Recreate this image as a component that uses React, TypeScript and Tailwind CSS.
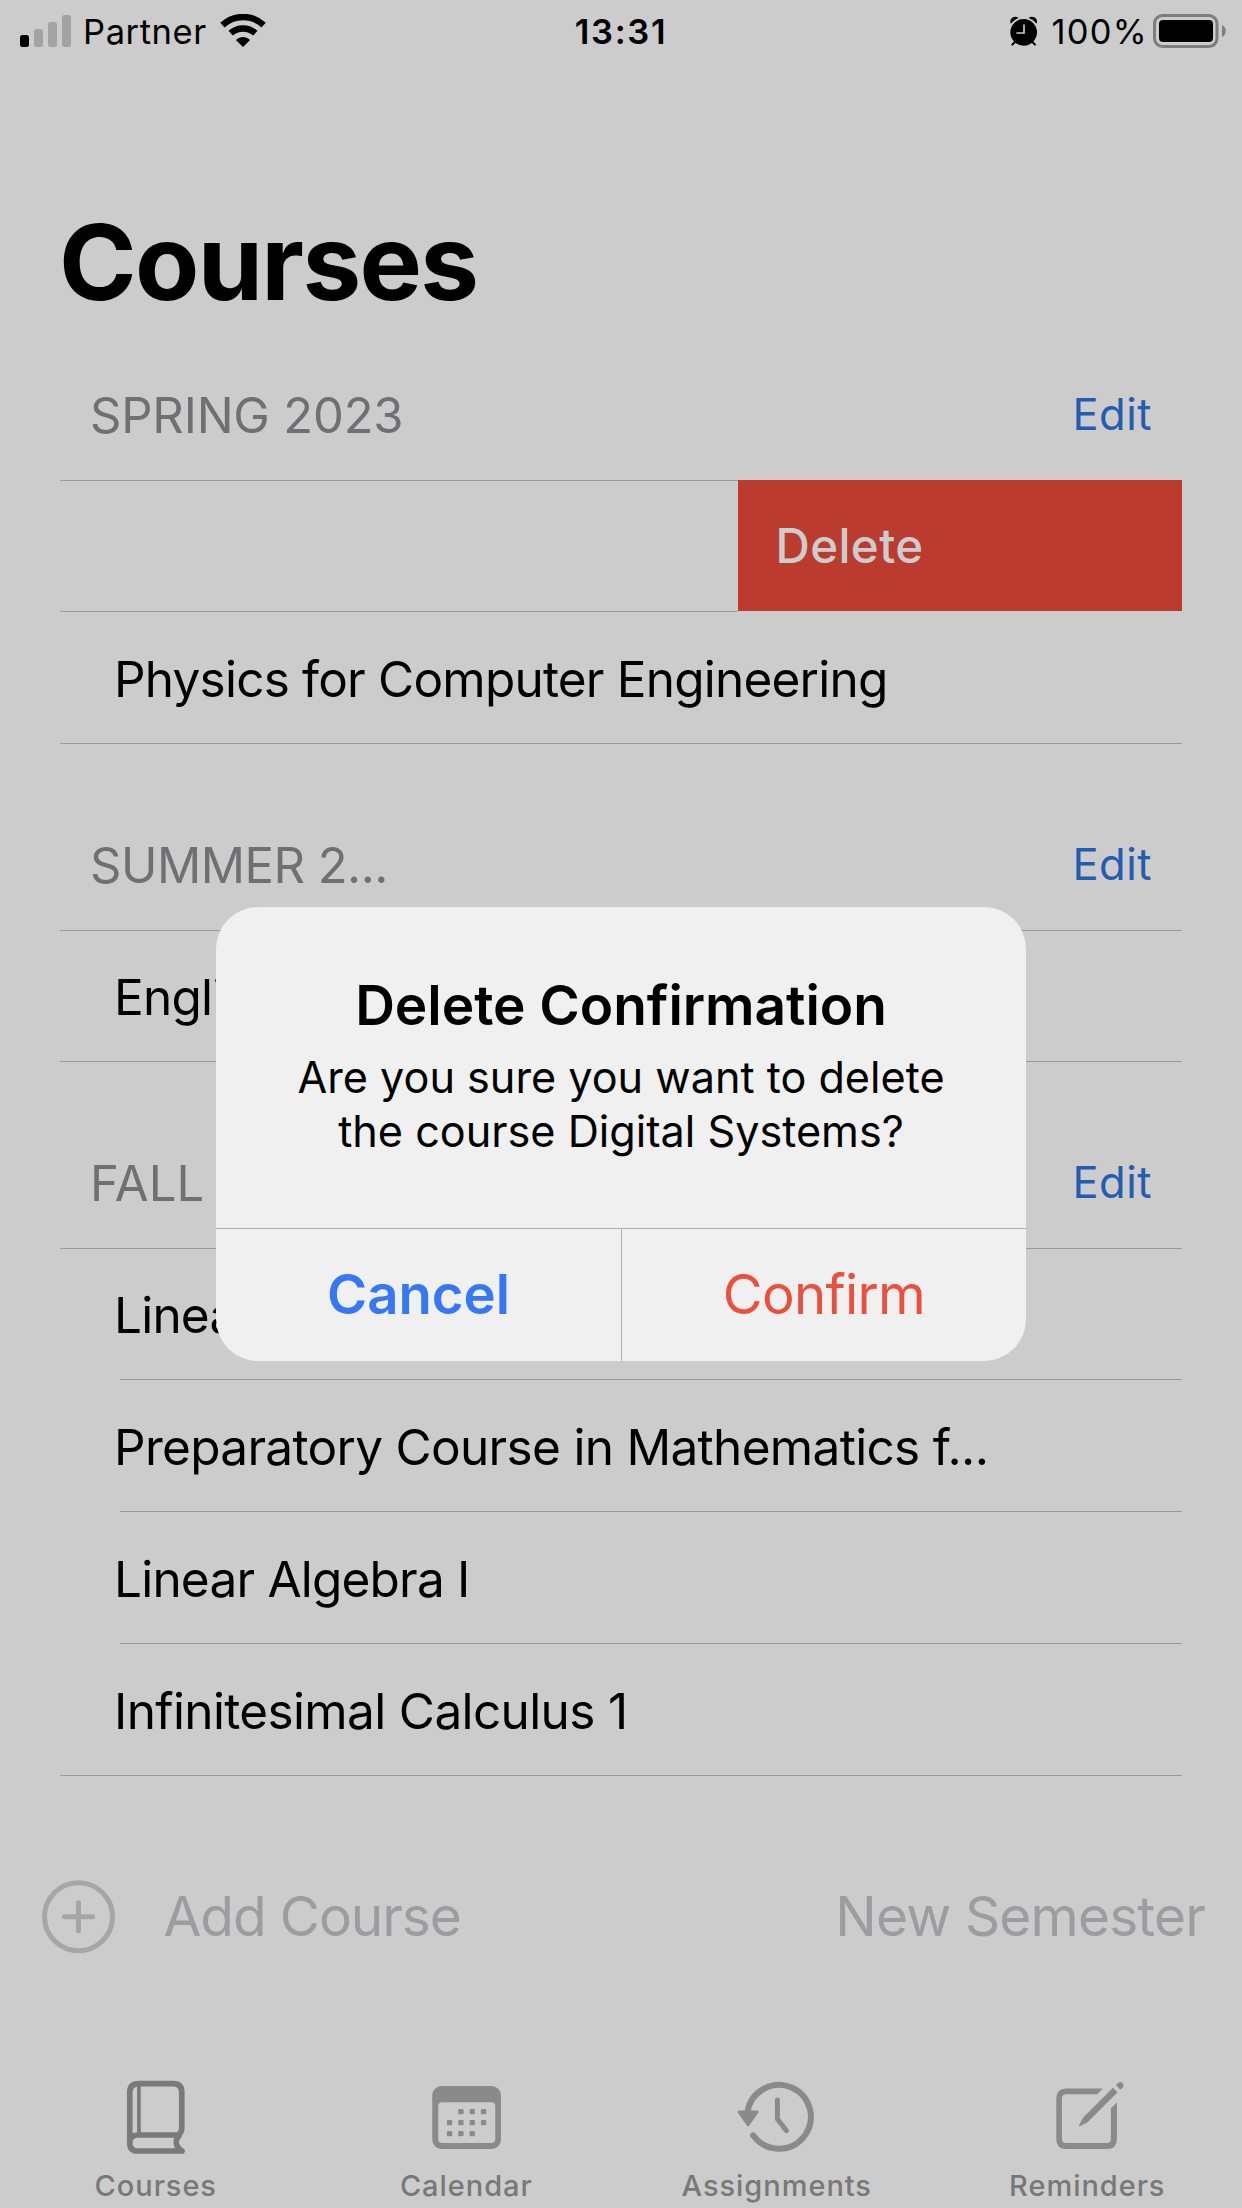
import type { ReactNode } from "react";

function SignalIcon() {
  return (
    <svg className="h-[32px] w-[51px] shrink-0" viewBox="0 0 51 32">
      <rect x="0" y="20" width="9" height="12" rx="2.5" fill="#000" />
      <rect x="14" y="14" width="9" height="18" rx="2.5" fill="#a3a3a3" />
      <rect x="28" y="7" width="9" height="25" rx="2.5" fill="#a3a3a3" />
      <rect x="42" y="0" width="9" height="32" rx="2.5" fill="#a3a3a3" />
    </svg>
  );
}

function WifiIcon() {
  return (
    <svg className="h-[34px] w-[46px] shrink-0" viewBox="-23 -33 46 34">
      <path d="M-20.6 -21.8A30 30 0 0 1 20.6 -21.8" fill="none" stroke="#000" strokeWidth="6.4" />
      <path d="M-12.4 -13.8A18.5 18.5 0 0 1 12.4 -13.8" fill="none" stroke="#000" strokeWidth="6.4" />
      <path d="M0 0L-6.6 -6.6Q-7 -7.4 -6 -8.1Q0 -12 6 -8.1Q7 -7.4 6.6 -6.6Z" fill="#000" />
    </svg>
  );
}

function AlarmIcon() {
  return (
    <svg className="h-[30px] w-[28px] shrink-0" viewBox="146 46 84 90">
      <circle cx="190" cy="95" r="40" fill="#000" />
      <path d="M151 69Q147 56 158 50Q168 45 175 52Q160 57 151 69Z" fill="#000" />
      <path d="M229 69Q233 56 222 50Q212 45 205 52Q220 57 229 69Z" fill="#000" />
      <path d="M164 124L156 132M216 124L224 132" stroke="#000" strokeWidth="6" strokeLinecap="round" />
      <path d="M191 73V97H170" fill="none" stroke="#ccc" strokeWidth="5" strokeLinecap="round" />
    </svg>
  );
}

function BatteryIcon() {
  return (
    <svg className="h-[34px] w-[73px] shrink-0" viewBox="0 0 73 34">
      <rect x="1.5" y="1.5" width="62.5" height="31" rx="8" fill="none" stroke="#7d7d7d" strokeWidth="3" />
      <rect x="6" y="6" width="54" height="22" rx="4" fill="#000" />
      <path d="M69 11Q72.7 13 72.7 17T69 23Z" fill="#7d7d7d" />
    </svg>
  );
}

function BookIcon() {
  return (
    <svg className="h-[80px] w-[90px]" viewBox="0.75 24 270 240" fill="none" stroke="#7a7a7a" strokeWidth="17">
      <path
        d="M60 218V68Q60 41 87 41H190Q216 41 216 67V176Q216 187 206 195H84Q60 196 60 218Q60 243 84 243H217"
        strokeLinecap="round"
        strokeLinejoin="round"
      />
      <path d="M211 193Q186 219 215 242" />
      <path d="M87.5 45V192" strokeWidth="11" />
    </svg>
  );
}

const calendarDots = [
  [1044, 117], [1078, 117], [1112, 117],
  [1010, 150], [1044, 150], [1078, 150], [1112, 150],
  [1010, 183], [1044, 183], [1078, 183],
];

function CalendarIcon() {
  return (
    <svg className="h-[80px] w-[90px]" viewBox="932.25 24 270 240" fill="#8a8a8a">
      <rect x="966" y="48" width="206" height="189" rx="28" />
      <rect x="984" y="97" width="171" height="122" rx="12" fill="#ccc" />
      {calendarDots.map(([x, y]) => (
        <rect key={`${x}-${y}`} x={x} y={y} width="16" height="16" rx="3" />
      ))}
    </svg>
  );
}

function HistoryIcon() {
  return (
    <svg className="h-[80px] w-[90px]" viewBox="3.75 24 270 240" fill="none" stroke="#8a8a8a">
      <path d="M53 128A95.5 95.5 0 1 1 70 196" strokeWidth="18" strokeLinecap="round" />
      <path d="M28 126H82L55 164Z" fill="#8a8a8a" strokeWidth="9" strokeLinejoin="round" />
      <path d="M143 90V147L170 182" strokeWidth="15" strokeLinecap="round" strokeLinejoin="round" />
    </svg>
  );
}

function ComposeIcon() {
  return (
    <svg className="h-[80px] w-[90px]" viewBox="935.25 24 270 240" fill="#8a8a8a">
      <path d="M1118 55.5H1008Q978 56 978 86V207Q978 237 1008 237H1130Q1160 237 1160 207V97L1142 115V207Q1142 219 1130 219H1008Q995 219 995 207V85Q995 73 1008 73H1101Z" />
      <path d="M1148 53L1162 67L1075 154Q1072 157 1068 159L1049 169Q1045 170 1047 165L1056 147Q1058 143 1061 140Z" />
      <path d="M1157 45L1163 39Q1170 33 1177 39Q1183 46 1177 53L1170 59Z" />
    </svg>
  );
}

function Section({ title, spacing, children }: { title: string; spacing: string; children: ReactNode }) {
  return (
    <section className="mb-[56px]">
      <header className="flex h-[130px] items-center justify-between px-[30px]">
        <h2 className={`pt-[2px] text-[49px] font-normal text-[#707072] ${spacing}`}>{title}</h2>
        <button className="mb-px text-[43.5px] tracking-[0.5px] text-[#235cb3]">Edit</button>
      </header>
      {children}
      <div className="h-px bg-[#9b9b9d]" />
    </section>
  );
}

type RowProps = { label: string; first?: boolean; line?: string; spacing?: string };

function Row({ label, first = false, line = "", spacing = "tracking-[-0.79px]" }: RowProps) {
  return (
    <div className={first ? "flex h-[131px] flex-col" : "flex h-[132px] flex-col"}>
      <div className={`h-px bg-[#9b9b9d] ${line}`} />
      <div className={`flex flex-1 items-center pt-[3px] pl-[54px] text-[49.5px] text-black ${spacing}`}>
        {label}
      </div>
    </div>
  );
}

function Tab({ icon, label }: { icon: ReactNode; label: string }) {
  return (
    <div className="flex w-1/4 flex-col items-center">
      {icon}
      <span className="mt-[8px] pl-px text-[29px] leading-[40px] font-medium tracking-[0.95px] text-[#787878]">
        {label}
      </span>
    </div>
  );
}

export default function App() {
  return (
    <div className="relative flex h-[2208px] w-[1242px] flex-col overflow-hidden bg-[#ccc] font-['Inter',sans-serif] whitespace-nowrap text-black">
      <div className="flex h-[62px] items-center pr-[16px] pl-[20px] text-[34.5px]">
        <div className="flex flex-1 items-center">
          <SignalIcon />
          <span className="ml-[12px] pt-px tracking-[0.6px]">Partner</span>
          <span className="ml-[13px]"><WifiIcon /></span>
        </div>
        <span className="pt-px pr-[4px] font-semibold tracking-[1.7px]">13:31</span>
        <div className="flex flex-1 items-center justify-end">
          <AlarmIcon />
          <span className="ml-[14px] pt-px tracking-[1.3px]">100%</span>
          <span className="ml-[5px]"><BatteryIcon /></span>
        </div>
      </div>

      <h1 className="mt-[134px] pl-[59px] text-[105px] leading-[132px] font-bold tracking-[-1.7px]">Courses</h1>

      <main className="mx-[60px] mt-[22px]">
        <Section title="SPRING 2023" spacing="tracking-[-0.2px]">
          <div className="flex h-[131px]">
            <div className="flex-1 border-t border-[#9b9b9d]" />
            <button className="flex w-[444px] items-center bg-[#bb3b2f] pl-[37.5px] text-[47.5px] font-medium tracking-[0.4px] text-[#ccc]">
              Delete
            </button>
          </div>
          <Row label="Physics for Computer Engineering" line="mr-[444px]" />
        </Section>
        <Section title="SUMMER 2..." spacing="tracking-[-0.5px]">
          <Row label="English" first />
        </Section>
        <Section title="FALL 2023" spacing="tracking-[0.2px]">
          <Row label="Linear Algebra" first />
          <Row label="Preparatory Course in Mathematics f..." line="ml-[60px]" spacing="tracking-[-0.69px]" />
          <Row label="Linear Algebra I" line="ml-[60px]" />
          <Row label="Infinitesimal Calculus 1" line="ml-[60px]" spacing="tracking-[-0.64px]" />
        </Section>
      </main>

      <div className="mt-[48px] flex h-[74px] items-center pr-[37px] pl-[42px] text-[55px] text-[#9d9d9f]">
        <svg className="h-[74px] w-[74px]" viewBox="0 0 74 74" fill="none" stroke="#a6a6a6" strokeWidth="5">
          <circle cx="36.5" cy="36.7" r="34" />
          <path d="M22.5 36.7H50.5M36.5 22.7V50.7" strokeLinecap="round" />
        </svg>
        <span className="ml-[47.5px] pb-[2px] tracking-[-1.1px]">Add Course</span>
        <span className="ml-auto pb-[2px] tracking-[-0.85px]">New Semester</span>
      </div>

      <nav className="mt-[124px] flex">
        <Tab icon={<BookIcon />} label="Courses" />
        <Tab icon={<CalendarIcon />} label="Calendar" />
        <Tab icon={<HistoryIcon />} label="Assignments" />
        <Tab icon={<ComposeIcon />} label="Reminders" />
      </nav>

      <div
        role="alertdialog"
        className="absolute top-[907px] left-[216px] flex h-[454px] w-[810px] flex-col overflow-hidden rounded-[42px] bg-[#f0f0f0] text-center"
      >
        <div className="flex-1 pt-[64px]">
          <h3 className="text-[55px] leading-[68px] font-semibold tracking-[-0.05px]">Delete Confirmation</h3>
          <p className="mt-[11px] text-[43.2px] leading-[54px]">
            Are you sure you want to delete
            <br />
            the course Digital Systems?
          </p>
        </div>
        <div className="flex h-[133px] border-t border-[#b0b0b2] text-[54.5px]">
          <button className="flex-1 border-r border-[#b0b0b2] font-semibold text-[#3478f6]">Cancel</button>
          <button className="w-[404px] tracking-[-0.7px] text-[#eb4f3d]">Confirm</button>
        </div>
      </div>
    </div>
  );
}
